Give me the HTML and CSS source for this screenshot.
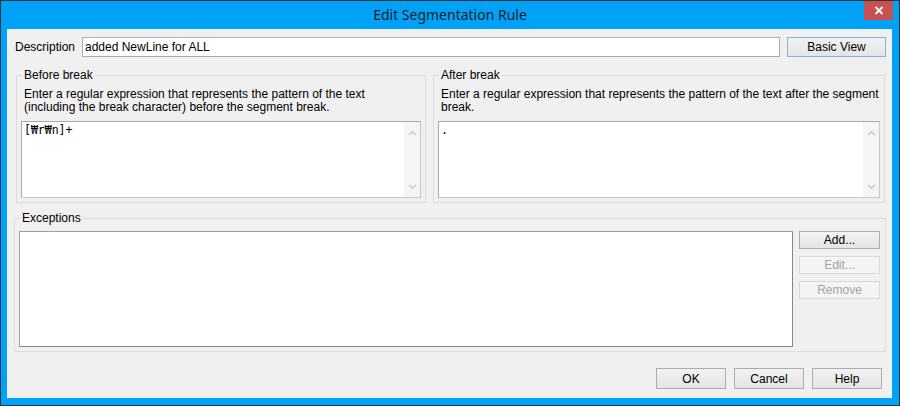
FILE: index.html
```html
<!DOCTYPE html>
<html lang="en">
  <head>
    <meta charset="UTF-8" />
    <title>Edit Segmentation Rule</title>
    <link rel="stylesheet" href="styles.css">
  </head>
  <body>
    <div class="window">
      <div class="titlebar">
        <span class="title">Edit Segmentation Rule</span>
        <button class="close" title="Close">
          <svg width="10" height="9" viewBox="0 0 10 9">
            <path d="M1.5 1 L8.5 8 M8.5 1 L1.5 8" stroke="#fff" stroke-width="1.8" fill="none" />
          </svg>
        </button>
      </div>

      <div class="client">
        <div class="desc-row">
          <label class="desc-label">Description</label>
          <div class="textbox">added NewLine for ALL</div>
          <button class="btn default basic-view">Basic View</button>
        </div>

        <div class="pattern-row">
          <fieldset class="group before">
            <legend>Before break</legend>
            <p class="hint">Enter a regular expression that represents the pattern of the text<br>(including the break character) before the segment break.</p>
            <div class="memo">
              <div class="memo-text">[₩r₩n]+</div>
              <div class="vscroll">
                <svg width="9" height="6" viewBox="0 0 9 6"><path d="M1 5 L4.5 1.5 L8 5" stroke="#c4c4c4" stroke-width="1.2" fill="none" /></svg>
                <svg width="9" height="6" viewBox="0 0 9 6"><path d="M1 1 L4.5 4.5 L8 1" stroke="#c4c4c4" stroke-width="1.2" fill="none" /></svg>
              </div>
            </div>
          </fieldset>

          <fieldset class="group after">
            <legend>After break</legend>
            <p class="hint">Enter a regular expression that represents the pattern of the text after the segment<br>break.</p>
            <div class="memo">
              <div class="memo-text">.</div>
              <div class="vscroll">
                <svg width="9" height="6" viewBox="0 0 9 6"><path d="M1 5 L4.5 1.5 L8 5" stroke="#c4c4c4" stroke-width="1.2" fill="none" /></svg>
                <svg width="9" height="6" viewBox="0 0 9 6"><path d="M1 1 L4.5 4.5 L8 1" stroke="#c4c4c4" stroke-width="1.2" fill="none" /></svg>
              </div>
            </div>
          </fieldset>
        </div>

        <fieldset class="group exceptions">
          <legend>Exceptions</legend>
          <div class="exc-body">
            <div class="listbox"></div>
            <div class="side-buttons">
              <button class="btn">Add...</button>
              <button class="btn" disabled>Edit...</button>
              <button class="btn" disabled>Remove</button>
            </div>
          </div>
        </fieldset>

        <div class="footer">
          <button class="btn">OK</button>
          <button class="btn">Cancel</button>
          <button class="btn">Help</button>
        </div>
      </div>
    </div>
  </body>
</html>
```

FILE: styles.css
```css
/* Dialog window */
body {
  margin: 0;
  font-family: "Liberation Sans", "Noto Sans CJK KR", Arial, sans-serif;
  font-size: 12px;
  color: #000;
}

.window {
  width: 900px;
  height: 406px;
  box-sizing: border-box;
  border: 1px solid #2f3338;
  background: #00a2f8;
  display: flex;
  flex-direction: column;
}

/* Title bar */
.titlebar {
  height: 28px;
  display: grid;
  grid-template-columns: 1fr auto 1fr;
  align-items: start;
}
.title {
  grid-column: 2;
  font-family: "Noto Sans", "Open Sans", sans-serif;
  font-size: 14px;
  line-height: 27px;
  color: #1a1f24;
}
.close {
  grid-column: 3;
  justify-self: end;
  width: 29px;
  height: 19px;
  margin-right: 6px;
  padding: 0;
  border: none;
  background: #c75050;
  display: flex;
  align-items: center;
  justify-content: center;
}

/* Client area */
.client {
  flex: 1;
  margin: 0 7px 7px 6px;
  background: #f0f0f0;
  padding: 8px 6px 0 7px;
  display: flex;
  flex-direction: column;
}

.desc-row {
  display: flex;
  align-items: center;
  height: 20px;
}
.desc-label {
  width: 67px;
  padding-left: 1px;
}
.textbox {
  width: 698px;
  height: 20px;
  box-sizing: border-box;
  border: 1px solid #abadb3;
  background: #fff;
  padding: 0 2px;
  line-height: 18px;
}
.basic-view {
  margin-left: 7px;
  width: 99px;
  height: 20px;
}

/* Group boxes */
.group {
  margin: 0;
  border: 1px solid #dcdcdc;
  padding: 0 4px 4px 4px;
  min-width: 0;
}
.group legend {
  padding: 0 2px;
  margin-left: 1px;
  line-height: 14px;
}

.pattern-row {
  display: flex;
  gap: 7px;
  margin-top: 11px;
  padding-left: 2px;
}
.before {
  width: 410px;
  box-sizing: border-box;
}
.after {
  width: 452px;
  box-sizing: border-box;
}
.hint {
  margin: 6px 0 7px 3px;
  line-height: 13px;
  height: 26px;
}

.memo {
  height: 77px;
  box-sizing: border-box;
  border: 1px solid #a9a9a9;
  border-right-color: #c8c8c8;
  border-bottom-color: #c8c8c8;
  background: #fff;
  display: flex;
}
.memo-text {
  flex: 1;
  padding: 1px 2px;
  line-height: 14px;
  font-family: "DejaVu Sans Mono", "Liberation Mono", monospace;
  font-size: 11.5px;
}
.vscroll {
  width: 16px;
  background: #f5f5f5;
  display: flex;
  flex-direction: column;
  justify-content: space-between;
  align-items: center;
  padding: 8px 0 7px;
}

.exceptions {
  margin-top: 8px;
  padding: 6px 5px 4px 4px;
}
.exc-body {
  display: flex;
  gap: 6px;
}
.listbox {
  width: 775px;
  height: 116px;
  box-sizing: border-box;
  border: 1px solid #a0a0a0;
  border-right-color: #828790;
  border-bottom-color: #828790;
  background: #fff;
}
.side-buttons {
  display: flex;
  flex-direction: column;
  gap: 7px;
}
.side-buttons .btn {
  width: 81px;
  height: 18px;
}

/* Push buttons */
.btn {
  font-family: inherit;
  font-size: 12px;
  color: #000;
  padding: 0;
  border: 1px solid #acacac;
  background: linear-gradient(#f2f2f2, #e4e4e4);
}
.btn.default {
  border-color: #7eb4ea;
}
.btn:disabled {
  color: #a3a3a3;
  border-color: #d9d9d9;
  background: #f4f4f4;
}

.footer {
  display: flex;
  justify-content: flex-end;
  gap: 8px;
  margin-top: 16px;
  padding-right: 4px;
}
.footer .btn {
  width: 70px;
  height: 21px;
}
```
